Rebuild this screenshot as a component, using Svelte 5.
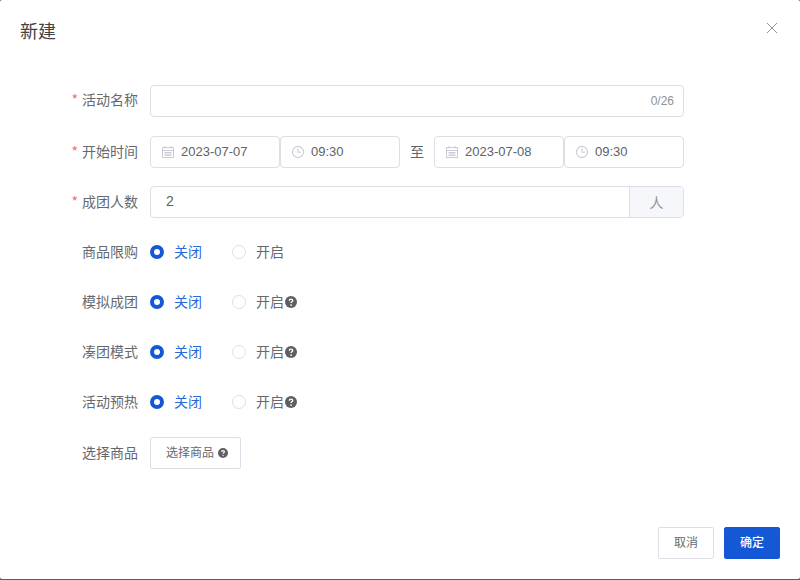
<script lang="ts">
	const radios = [
		{ label: '商品限购', help: false },
		{ label: '模拟成团', help: true },
		{ label: '凑团模式', help: true },
		{ label: '活动预热', help: true }
	];
</script>

{#snippet calendar()}
	<svg class="field-icon" viewBox="0 0 14 14" width="14" height="14" fill="none" stroke="#c9ccd6" stroke-width="1">
		<rect x="1.5" y="2.5" width="11" height="10" />
		<path d="M1.5 5.5h11M4 1v2.5M10 1v2.5M3.5 7.5h7M3.5 9h7M3.5 10.5h7" />
	</svg>
{/snippet}

{#snippet clock()}
	<svg class="field-icon" viewBox="0 0 14 14" width="14" height="14" fill="none" stroke="#c9ccd6" stroke-width="1.1">
		<circle cx="7" cy="7" r="5.6" />
		<path d="M7 3.6V7.3h3" />
	</svg>
{/snippet}

{#snippet help()}
	<svg class="help" viewBox="0 0 12 12" width="12" height="12">
		<circle cx="6" cy="6" r="6" fill="#5f5f63" />
		<path d="M4.3 4.7c0-1 .8-1.6 1.7-1.6s1.7.6 1.7 1.5c0 1.2-1.6 1.2-1.6 2.4" fill="none" stroke="#fff" stroke-width="1.4" />
		<circle cx="6.1" cy="9.1" r=".85" fill="#fff" />
	</svg>
{/snippet}

<div class="dialog">
	<header class="head">
		<h2>新建</h2>
		<svg class="close" viewBox="0 0 12 12" width="12" height="12" fill="none" stroke="#909399" stroke-width="1">
			<path d="M1 1l10 10M11 1L1 11" />
		</svg>
	</header>

	<form class="form">
		<div class="row first">
			<span class="label"><i>*</i>活动名称</span>
			<div class="box name">
				<span class="count">0/26</span>
			</div>
		</div>

		<div class="row">
			<span class="label"><i>*</i>开始时间</span>
			<div class="times">
				<div class="box date">{@render calendar()}<span class="num">2023-07-07</span></div>
				<div class="box time">{@render clock()}<span class="num">09:30</span></div>
				<span class="to">至</span>
				<div class="box date">{@render calendar()}<span class="num">2023-07-08</span></div>
				<div class="box time">{@render clock()}<span class="num">09:30</span></div>
			</div>
		</div>

		<div class="row">
			<span class="label"><i>*</i>成团人数</span>
			<div class="box group">
				<span class="value">2</span>
				<span class="unit">人</span>
			</div>
		</div>

		{#each radios as item (item.label)}
			<div class="row">
				<span class="label">{item.label}</span>
				<div class="radios">
					<span class="radio on"><b></b><span class="text">关闭</span></span>
					<span class="radio"><b></b><span class="text">开启</span>{#if item.help}{@render help()}{/if}</span>
				</div>
			</div>
		{/each}

		<div class="row last">
			<span class="label">选择商品</span>
			<button type="button" class="btn pick">选择商品 {@render help()}</button>
		</div>
	</form>

	<footer class="foot">
		<button type="button" class="btn">取消</button>
		<button type="button" class="btn primary">确定</button>
	</footer>
</div>

<style>
	:global(body) {
		margin: 0;
		background: #5c5c5c;
	}

	.dialog {
		width: 800px;
		height: 579px;
		background: #fff;
		border-radius: 2px;
		display: flex;
		flex-direction: column;
		font-family: 'Liberation Sans', 'Noto Sans CJK SC', sans-serif;
		font-size: 13px;
		color: #606266;
	}

	.head {
		display: flex;
		justify-content: space-between;
		padding: 19px 22px 0 20px;
		height: 85px;
		box-sizing: border-box;
	}

	.head h2 {
		margin: 0;
		font-family: 'Noto Sans CJK SC', sans-serif;
		font-size: 18px;
		font-weight: 400;
		line-height: 22px;
		color: #414245;
	}

	.close {
		margin-top: 3px;
	}

	.form {
		display: flex;
		flex-direction: column;
		flex: 1;
	}

	.row {
		display: flex;
		align-items: center;
		height: 32px;
		margin-bottom: 18px;
	}

	.row.first {
		margin-bottom: 19px;
	}

	.row.last {
		margin-top: 1px;
	}

	.label {
		width: 138px;
		margin-right: 12px;
		padding-bottom: 2px;
		text-align: right;
		flex: none;
		font-family: 'Noto Sans CJK SC', sans-serif;
		font-size: 14px;
		line-height: 20px;
		color: #67696e;
	}

	.first .label {
		padding-bottom: 4px;
	}

	.label i {
		color: #f56c6c;
		font-style: normal;
		margin-right: 4px;
	}

	.box {
		height: 32px;
		box-sizing: border-box;
		border: 1px solid #dcdfe6;
		border-radius: 4px;
		display: flex;
		align-items: center;
	}

	.name {
		width: 534px;
		justify-content: flex-end;
		padding-right: 9px;
	}

	.count {
		font-size: 12px;
		color: #909399;
	}

	.times {
		display: flex;
		align-items: center;
		width: 534px;
	}

	.date {
		width: 130px;
		padding-left: 10px;
		gap: 6px;
	}

	.time {
		width: 120px;
		padding-left: 10px;
		gap: 6px;
	}

	.num {
		padding-bottom: 2px;
	}

	.field-icon {
		flex: none;
	}

	.to {
		width: 34px;
		padding-bottom: 2px;
		text-align: center;
		font-family: 'Noto Sans CJK SC', sans-serif;
		font-size: 14px;
		color: #606266;
	}

	.group {
		width: 534px;
		overflow: hidden;
	}

	.value {
		flex: 1;
		padding-left: 15px;
		padding-bottom: 2px;
		font-size: 14px;
	}

	.unit {
		width: 54px;
		height: 100%;
		box-sizing: border-box;
		background: #f5f7fa;
		border-left: 1px solid #dcdfe6;
		display: flex;
		align-items: center;
		justify-content: center;
		font-family: 'Noto Sans CJK SC', sans-serif;
		font-size: 14px;
		color: #909399;
	}

	.radios {
		display: flex;
	}

	.radio {
		display: flex;
		align-items: center;
		width: 82px;
		gap: 10px;
		font-family: 'Noto Sans CJK SC', sans-serif;
		font-size: 14px;
		line-height: 20px;
		color: #67696e;
	}

	.text {
		padding-bottom: 2px;
	}

	.radio b {
		width: 14px;
		height: 14px;
		box-sizing: border-box;
		border: 1px solid #dcdfe6;
		border-radius: 50%;
		flex: none;
	}

	.radio.on {
		color: #2a68da;
	}

	.radio.on b {
		border: 4.5px solid #1558d6;
	}

	.help {
		margin-left: -9px;
		flex: none;
	}

	.btn {
		height: 32px;
		box-sizing: border-box;
		border: 1px solid #dcdfe6;
		border-radius: 2px;
		background: #fff;
		color: #67696e;
		font-family: 'Noto Sans CJK SC', sans-serif;
		font-size: 12px;
		width: 56px;
		padding: 0 0 3px;
	}

	.btn.pick {
		width: 91px;
		display: flex;
		align-items: center;
		gap: 4px;
		padding-left: 15px;
	}

	.btn.pick .help {
		margin: 3px 0 0;
		width: 10px;
		height: 10px;
	}

	.primary {
		background: #1558d6;
		border-color: #1558d6;
		color: #fff;
		font-weight: 500;
	}

	.foot {
		display: flex;
		justify-content: flex-end;
		gap: 10px;
		padding: 0 20px 20px;
	}
</style>
